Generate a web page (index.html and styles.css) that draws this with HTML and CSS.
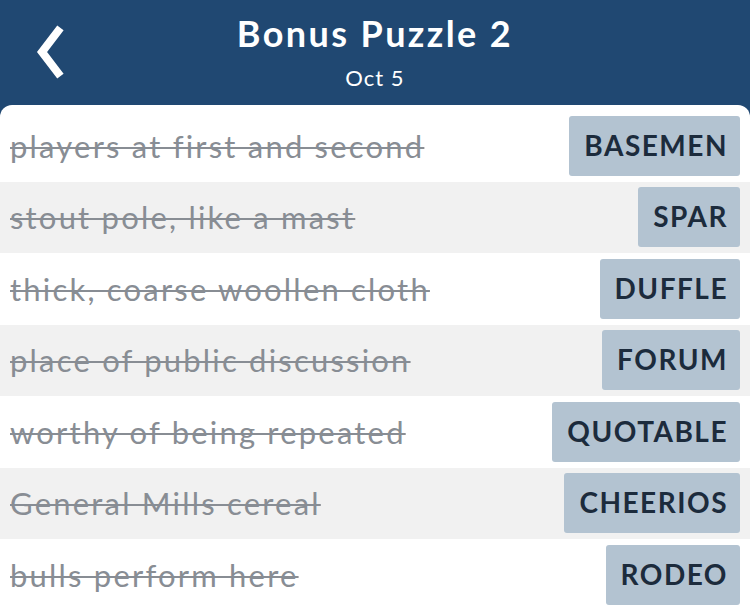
FILE: index.html
```html
<!DOCTYPE html>
<html lang="en">
<head>
    <meta charset="UTF-8">
    <meta name="viewport" content="width=device-width, initial-scale=1.0">
    <title>Bonus Puzzle 2</title>
    <link rel="stylesheet" href="styles.css">
</head>
<body>
    <div class="header">
        <button class="back" aria-label="Back">
            <svg width="40" height="56" viewBox="0 0 40 56">
                <path d="M25 6 L9 27 L25 48" fill="none" stroke="#fff" stroke-width="8" stroke-linecap="square" stroke-linejoin="miter"/>
            </svg>
        </button>
        <div class="title">Bonus Puzzle 2</div>
        <div class="date">Oct 5</div>
    </div>
    <div class="card">
        <ul class="clues">
            <li class="clue"><span class="text">players at first and second</span><span class="answer">BASEMEN</span></li>
            <li class="clue"><span class="text">stout pole, like a mast</span><span class="answer">SPAR</span></li>
            <li class="clue"><span class="text">thick, coarse woollen cloth</span><span class="answer">DUFFLE</span></li>
            <li class="clue"><span class="text">place of public discussion</span><span class="answer">FORUM</span></li>
            <li class="clue"><span class="text">worthy of being repeated</span><span class="answer">QUOTABLE</span></li>
            <li class="clue"><span class="text">General Mills cereal</span><span class="answer">CHEERIOS</span></li>
            <li class="clue"><span class="text">bulls perform here</span><span class="answer">RODEO</span></li>
        </ul>
    </div>
</body>
</html>
```

FILE: styles.css
```css
body {
    margin: 0;
    font-family: Lato, "Open Sans", sans-serif;
    background: #204872;
    height: 614px;
    overflow: hidden;
}
.header {
    position: relative;
    height: 105px;
    text-align: center;
    color: #fff;
}
.back {
    position: absolute;
    left: 33px;
    top: 25px;
    border: none;
    background: none;
    padding: 0;
    cursor: pointer;
}
.title {
    padding-top: 11px;
    font-size: 36px;
    font-weight: bold;
    line-height: 44px;
    letter-spacing: 2.4px;
}
.date {
    padding-top: 8px;
    font-size: 22px;
    line-height: 30px;
    letter-spacing: 1px;
}
.card {
    background: #fff;
    border-radius: 12px 12px 0 0;
    padding-top: 5px;
    height: 509px;
}
.clues {
    list-style: none;
    margin: 0;
    padding: 0;
}
.clue {
    display: flex;
    align-items: center;
    justify-content: space-between;
    height: 71.5px;
    padding: 0 10px;
}
.clue:nth-child(even) {
    background: #f1f1f1;
}
.text {
    font-size: 31px;
    letter-spacing: 2.2px;
    color: #888d94;
    text-decoration: line-through;
    text-decoration-thickness: 2px;
}
.answer {
    background: #b3c3d1;
    color: #1c2b3c;
    font-size: 28px;
    font-weight: bold;
    letter-spacing: 1.5px;
    height: 60px;
    line-height: 58px;
    padding: 0 12px 0 15px;
    border-radius: 3px;
}
```
